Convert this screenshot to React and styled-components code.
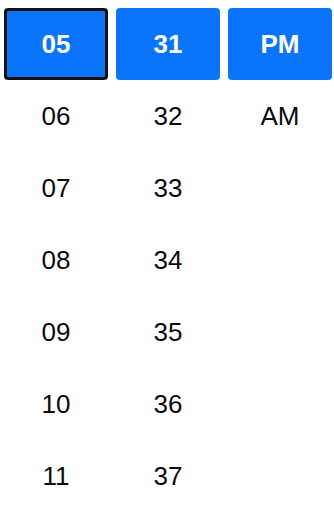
import React, { useState } from "react"
import styled, { createGlobalStyle } from "styled-components"

const GlobalStyle = createGlobalStyle`
  body {
    margin: 0;
    background: #ffffff;
    font-family: "Liberation Sans", Arial, sans-serif;
  }
`

const hours = ["05", "06", "07", "08", "09", "10", "11"]
const minutes = ["31", "32", "33", "34", "35", "36", "37"]
const periods = ["PM", "AM"]

const TimePicker = () => {
  const [hour, setHour] = useState("05")
  const [minute, setMinute] = useState("31")
  const [period, setPeriod] = useState("PM")

  const renderColumn = (items, value, setValue, focused) => (
    <Column>
      {items.map(item => (
        <Cell
          key={item}
          $selected={item === value}
          $focused={focused && item === value}
          onClick={() => setValue(item)}
        >
          {item}
        </Cell>
      ))}
    </Column>
  )

  return (
    <Wrapper>
      {renderColumn(hours, hour, setHour, true)}
      {renderColumn(minutes, minute, setMinute, false)}
      {renderColumn(periods, period, setPeriod, false)}
    </Wrapper>
  )
}

const App = () => (
  <>
    <GlobalStyle />
    <TimePicker />
  </>
)

const Wrapper = styled.div`
  display: grid;
  grid-template-columns: repeat(3, 104px);
  column-gap: 8px;
  padding: 8px 2px 0 4px;
  align-items: start;
`

const Column = styled.div`
  display: flex;
  flex-direction: column;
`

const Cell = styled.button`
  box-sizing: border-box;
  height: 72px;
  width: 104px;
  display: flex;
  align-items: center;
  justify-content: center;
  padding: 0;
  border: ${({ $focused }) => ($focused ? "3.5px solid #111111" : "none")};
  border-radius: 4px;
  background: ${({ $selected }) => ($selected ? "#0a75fb" : "transparent")};
  color: ${({ $selected }) => ($selected ? "#ffffff" : "#0a0a0a")};
  font-family: "Liberation Sans", Arial, sans-serif;
  font-size: 26px;
  font-weight: ${({ $selected }) => ($selected ? 700 : 400)};
  cursor: pointer;
  outline: none;
`

export default App
